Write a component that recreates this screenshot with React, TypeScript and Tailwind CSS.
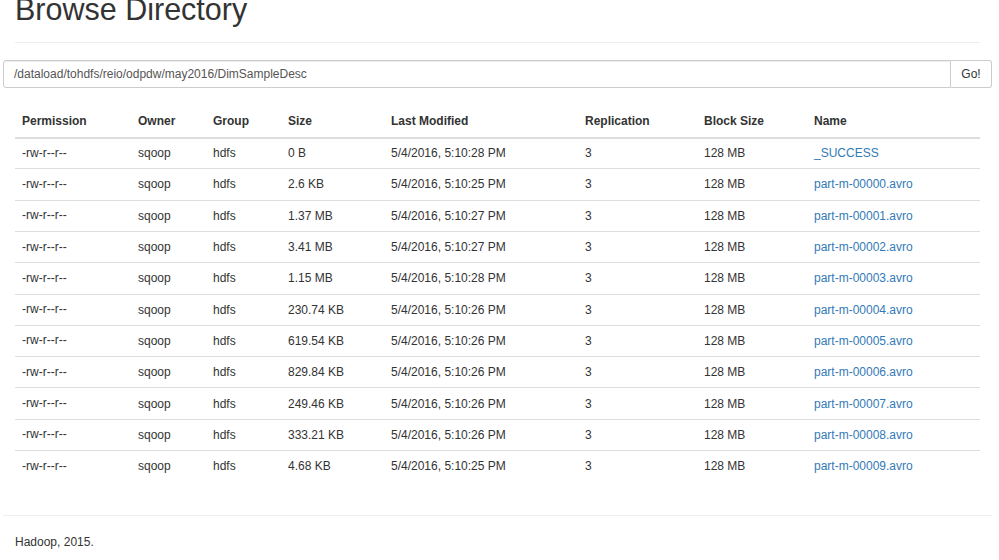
import React from "react";

const rows = [
  ["0 B", "5/4/2016, 5:10:28 PM", "_SUCCESS"],
  ["2.6 KB", "5/4/2016, 5:10:25 PM", "part-m-00000.avro"],
  ["1.37 MB", "5/4/2016, 5:10:27 PM", "part-m-00001.avro"],
  ["3.41 MB", "5/4/2016, 5:10:27 PM", "part-m-00002.avro"],
  ["1.15 MB", "5/4/2016, 5:10:28 PM", "part-m-00003.avro"],
  ["230.74 KB", "5/4/2016, 5:10:26 PM", "part-m-00004.avro"],
  ["619.54 KB", "5/4/2016, 5:10:26 PM", "part-m-00005.avro"],
  ["829.84 KB", "5/4/2016, 5:10:26 PM", "part-m-00006.avro"],
  ["249.46 KB", "5/4/2016, 5:10:26 PM", "part-m-00007.avro"],
  ["333.21 KB", "5/4/2016, 5:10:26 PM", "part-m-00008.avro"],
  ["4.68 KB", "5/4/2016, 5:10:25 PM", "part-m-00009.avro"],
];

export default function App() {
  return (
    <div
      className="w-[999px] h-[560px] overflow-hidden bg-white text-[#333] text-[12px]"
      style={{ fontFamily: '"Liberation Sans", Arial, sans-serif' }}
    >
      <div className="px-[15px] w-[995px]">
        <h1 className="mt-[-7px] text-[30.5px] leading-[1.1] font-normal text-[#333]">
          Browse Directory
        </h1>
        <div className="mt-[15px] h-px bg-[#eee] w-[965px]" />
      </div>
      <div className="mt-[17px] ml-[3px] w-[989px] flex h-[28px]">
        <div className="flex-1 border border-[#ccc] rounded-l-[3px] shadow-[inset_0_1px_1px_rgba(0,0,0,0.075)] flex items-center pl-[10px] text-[#555] text-[12px]">
          /dataload/tohdfs/reio/odpdw/may2016/DimSampleDesc
        </div>
        <div className="w-[41px] border border-l-0 border-[#ccc] rounded-r-[3px] bg-white flex items-center justify-center text-[12px] text-[#333]">
          Go!
        </div>
      </div>
      <div className="px-[15px] mt-[19px]">
        <table className="table-fixed w-[965px] border-collapse">
          <colgroup>
            <col className="w-[116px]" />
            <col className="w-[75px]" />
            <col className="w-[75px]" />
            <col className="w-[103px]" />
            <col className="w-[194px]" />
            <col className="w-[119px]" />
            <col className="w-[110px]" />
            <col className="w-[173px]" />
          </colgroup>
          <thead>
            <tr className="border-b-2 border-[#ddd]">
              {["Permission", "Owner", "Group", "Size", "Last Modified", "Replication", "Block Size", "Name"].map((h) => (
                <th key={h} className="text-left font-bold px-[7px] h-[31px] leading-[17px] align-middle">
                  {h}
                </th>
              ))}
            </tr>
          </thead>
          <tbody>
            {rows.map((r, i) => (
              <tr key={i} className={i < rows.length - 1 ? "border-b border-[#ddd]" : ""}>
                <td className="px-[7px] h-[31.3px] leading-[17px] align-middle">-rw-r--r--</td>
                <td className="px-[7px] align-middle">sqoop</td>
                <td className="px-[7px] align-middle">hdfs</td>
                <td className="px-[7px] align-middle">{r[0]}</td>
                <td className="px-[7px] align-middle">{r[1]}</td>
                <td className="px-[7px] align-middle">3</td>
                <td className="px-[7px] align-middle">128 MB</td>
                <td className="px-[7px] align-middle">
                  <a className="text-[#337ab7]" href="#">{r[2]}</a>
                </td>
              </tr>
            ))}
          </tbody>
        </table>
      </div>
      <div className="mt-[33px] ml-[3px] w-[989px] h-px bg-[#eee]" />
      <div className="px-[15px] mt-[18px] leading-[17px]">Hadoop, 2015.</div>
    </div>
  );
}
